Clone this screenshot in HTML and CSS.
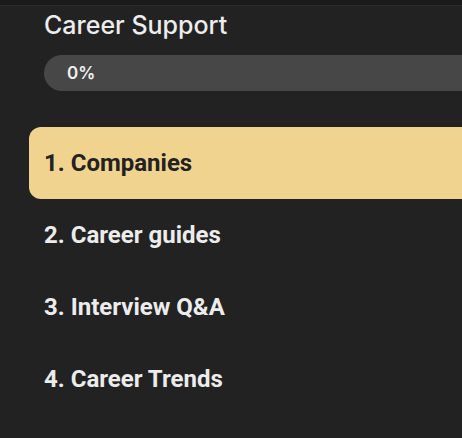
FILE: index.html
```html
<!DOCTYPE html>
<html lang="en">
<head>
  <meta charset="UTF-8" />
  <title>Career Support</title>
  <link rel="stylesheet" href="styles.css">
</head>
<body>

<div class="topbar"></div>

<div class="sidebar">
  <h2 class="course-title">Career Support</h2>
  <div class="progress-bar">
    <span class="progress-label">0%</span>
  </div>

  <ul class="lessons">
    <li class="lesson active">1. Companies</li>
    <li class="lesson">2. Career guides</li>
    <li class="lesson">3. Interview Q&amp;A</li>
    <li class="lesson">4. Career Trends</li>
  </ul>
</div>

</body>
</html>
```

FILE: styles.css
```css
:root {
  --bg: #222222;
  --bar: #474747;
  --text: #ececec;
  --highlight: #f0d38e;
  --dark-text: #222222;
}

* {
  box-sizing: border-box;
  margin: 0;
  padding: 0;
}

body {
  background: var(--bg);
  color: var(--text);
  font-family: Inter, 'Noto Sans', sans-serif;
  width: 462px;
  height: 438px;
  overflow: hidden;
}

.topbar {
  height: 6px;
  background: #1b1b1b;
  border-bottom: 1px solid #2a2a2a;
}

.sidebar {
  width: 520px;
  padding-left: 29px;
}

.course-title {
  font-size: 25px;
  font-weight: 500;
  line-height: 32px;
  margin: 3px 0 0 15px;
  color: #ededed;
}

.progress-bar {
  margin: 14px 0 0 15px;
  height: 36px;
  border-radius: 18px;
  background: var(--bar);
  display: flex;
  align-items: center;
  padding-left: 23px;
}

.progress-label {
  font-size: 17px;
  font-weight: 600;
  color: #f2f2f2;
}

.lessons {
  list-style: none;
  margin-top: 36px;
}

.lesson {
  height: 72px;
  display: flex;
  align-items: center;
  padding-left: 15px;
  font-family: Roboto, sans-serif;
  font-weight: 700;
  font-size: 24px;
  color: var(--text);
  border-radius: 12px 0 0 12px;
}

.lesson.active {
  background: var(--highlight);
  color: var(--dark-text);
}
```
